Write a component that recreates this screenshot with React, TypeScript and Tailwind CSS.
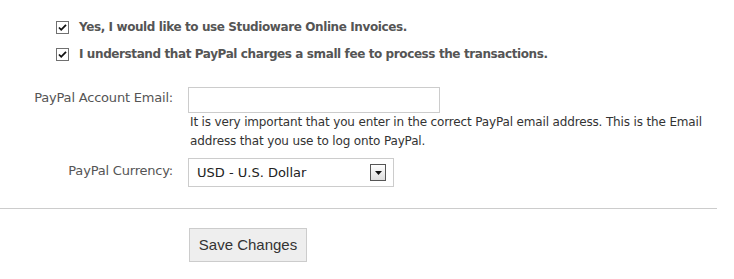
import { useState } from "react";

const Check = ({ checked, onChange }: { checked: boolean; onChange: () => void }) => (
  <button
    type="button"
    onClick={onChange}
    className="w-[13px] h-[13px] border border-[#707070] bg-white flex items-center justify-center shrink-0"
  >
    {checked && (
      <svg width="9" height="9" viewBox="0 0 9 9">
        <path d="M1 4.5 L3.2 6.8 L8 1.8" stroke="#111" strokeWidth="1.8" fill="none" />
      </svg>
    )}
  </button>
);

const App = () => {
  const [useInvoices, setUseInvoices] = useState(true);
  const [feeOk, setFeeOk] = useState(true);
  const [email, setEmail] = useState("");
  const [currency, setCurrency] = useState("USD");

  return (
    <div className="w-[734px] h-[279px] bg-white font-['DejaVu_Sans',sans-serif] text-[#555]">
      {/* agreements */}
      <div className="pt-[18px] pl-[56px] flex flex-col gap-[9px]">
        <label className="flex items-center gap-[10px] text-[12px] font-bold tracking-[-0.4px]">
          <Check checked={useInvoices} onChange={() => setUseInvoices(!useInvoices)} />
          Yes, I would like to use Studioware Online Invoices.
        </label>
        <label className="flex items-center gap-[10px] text-[12px] font-bold tracking-[-0.4px]">
          <Check checked={feeOk} onChange={() => setFeeOk(!feeOk)} />
          I understand that PayPal charges a small fee to process the transactions.
        </label>
      </div>

      {/* email */}
      <div className="mt-[24px] flex">
        <div className="w-[173px] text-right text-[13px] leading-[20px] pt-[1px] tracking-[-0.2px]">PayPal Account Email:</div>
        <div className="pl-[15px]">
          <input
            value={email}
            onChange={(e) => setEmail(e.target.value)}
            className="w-[252px] h-[26px] border border-[#ccc] outline-none px-1 text-[13px]"
          />
          <p className="w-[524px] text-[12px] leading-[19px] text-[#333] pl-[2px] tracking-[-0.15px]">
            It is very important that you enter in the correct PayPal email address. This is the Email address that you use to log onto PayPal.
          </p>
        </div>
      </div>

      {/* currency */}
      <div className="mt-[7px] flex">
        <div className="w-[173px] text-right text-[13px] leading-[20px] pt-[3px] tracking-[-0.2px]">PayPal Currency:</div>
        <div className="pl-[15px]">
          <div className="relative w-[206px] h-[29px] border border-[#ccc] bg-white">
            <select
              value={currency}
              onChange={(e) => setCurrency(e.target.value)}
              className="appearance-none w-full h-full pl-[8px] text-[13px] text-[#222] outline-none bg-transparent"
            >
              <option value="USD">USD - U.S. Dollar</option>
              <option value="EUR">EUR - Euro</option>
              <option value="GBP">GBP - British Pound</option>
            </select>
            <div className="pointer-events-none absolute right-[7px] top-[5px] w-[16px] h-[17px] border border-[#555] bg-gradient-to-b from-white to-[#ddd] flex items-center justify-center">
              <svg width="7" height="4" viewBox="0 0 7 4">
                <path d="M0 0 H7 L3.5 4 Z" fill="#111" />
              </svg>
            </div>
          </div>
        </div>
      </div>

      <hr className="mt-[21px] w-[717px] border-t border-[#ccc]" />

      <div className="pl-[189px] pt-[19px]">
        <button className="w-[118px] h-[34px] bg-[#eee] border border-[#ccc] text-[15px] text-[#333] font-['Liberation_Sans',sans-serif]">
          Save Changes
        </button>
      </div>
    </div>
  );
};

export default App;
